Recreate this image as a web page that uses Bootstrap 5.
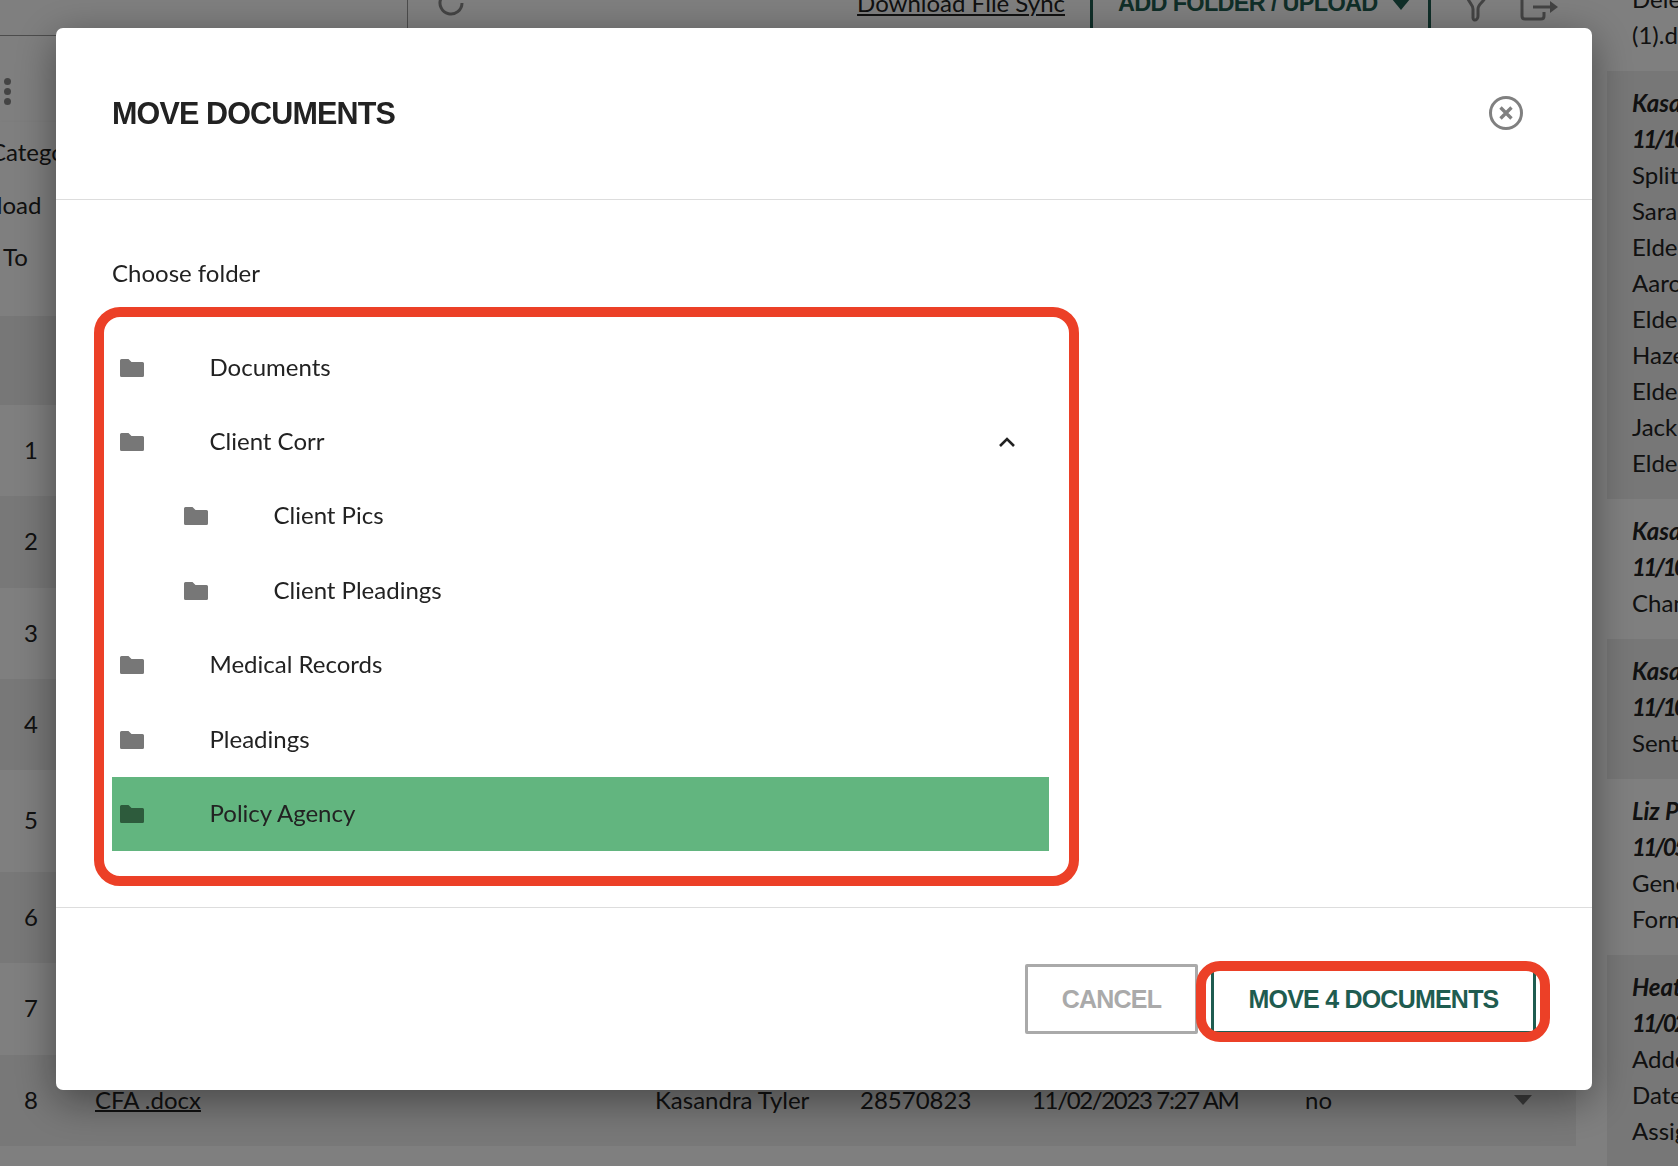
<!doctype html>
<html lang="en">
<head>
<meta charset="utf-8">
<title>Move documents</title>
<link rel="stylesheet" href="https://cdn.jsdelivr.net/npm/bootstrap@5.3.0/dist/css/bootstrap.min.css">
<style>
html,body{height:100%;overflow:hidden}
body{font-family:"Lato","Liberation Sans",sans-serif;font-size:24px;color:#222;background:#fff}
.pg-wrap{width:1678px;height:1166px;overflow:hidden}
.main-col{width:1576px;flex:none}
.side-col{width:102px;flex:none;padding-left:31px;margin-top:-33px;line-height:36px;white-space:nowrap;overflow:hidden}
.side-block{padding:14px 0 18px 25px;width:200px;overflow:hidden}
.side-block.shaded{background:#eee}
.side-head{font-weight:700;font-style:italic}
.side-date{letter-spacing:-2.500px}
.top-bar{height:56px;margin-top:-20px}
.top-left{width:408px;border-right:1px solid #999;border-bottom:1px solid #999}
.top-mid{width:682px;padding:0 25px 10px 29px}
.top-mid a{color:#222}
.add-btn{width:341px;height:56px;border-left:3px solid #1f5c50;border-right:3px solid #1f5c50;padding:0 0 10px 25px;font:700 23.500px "Liberation Sans",sans-serif;letter-spacing:-.7px;color:#1f5c50;gap:14px}
.caret-down{width:0;height:0;border-left:9.500px solid transparent;border-right:9.500px solid transparent;border-top:11px solid #1f5c50;margin-top:2px}
.top-icons{gap:30px;padding:0 0 0 34px;margin-top:16px}
.dots-zone{height:86px;padding:42px 0 0 4px}
.dots-zone i{display:block;width:7px;height:7px;border-radius:50%;background:#888;margin-bottom:3px}
.side-menu{height:168px;box-shadow:0 4px 6px rgba(0,0,0,.3);background:#fff;line-height:52.500px;padding-top:4px;overflow:hidden;white-space:nowrap}
.mi-a{margin-left:-10px}.mi-b{margin-left:-34px}.mi-c{margin-left:3px}
.band-a{height:26px;background:#fff}
.band-b{height:89px;background:#eee}
.doc-row{padding-bottom:2px}
.doc-row.even{background:#f0f0f0}
.h91{height:91px}.h92{height:92px}.h102{height:102px}
.num-cell{width:62px;text-align:center}
.c-name{width:33px}
.c-file{width:560px}.c-file a{color:#222;text-decoration-thickness:2px}
.c-user{width:205px}.c-id{width:172px}.c-date{width:273px;letter-spacing:-1.350px}.c-flag{width:209px}
.caret-mini{width:0;height:0;border-left:9.500px solid transparent;border-right:9.500px solid transparent;border-top:10px solid #777}
.foot-band{height:20px;background:#fff}
.dim-layer{position:fixed;inset:0;background:rgba(0,0,0,.5);z-index:1040}
.move-modal{z-index:1050;overflow:hidden}
.move-dialog{max-width:none;width:1536px;height:1062px;margin:28px 0 0 56px}
.move-content{height:1062px;border:0;border-radius:7px;box-shadow:0 10px 42px rgba(0,0,0,.42)}
.move-head{height:172px;padding:0 56px;border-bottom:1px solid #ddd;border-radius:0}
.move-title{font:700 30.500px/1 "Liberation Sans",sans-serif;letter-spacing:-.85px;color:#222;margin:0}
.close-x{background:none;border:0;padding:0;width:36px;height:36px;margin:-2px 12px 0 auto;line-height:0}
.move-body{padding:56px 56px 0;flex:1 1 auto}
.choose-label{line-height:34px;height:51px}
.tree-ring{width:985px;height:579px;margin-left:-18px;border:10px solid #ec4027;border-radius:26px;padding:13.500px 20px 0 8px}
.tree-item{height:74.400px;padding-left:8px;color:#222}
.tree-item span{margin-top:-2px}
.tree-item.nested{padding-left:72px}
.tree-item.picked{background:#62b57f}
.tree-item.picked .ficon{fill:#2d5b3c}
.ficon{fill:#777;width:24px;height:18px;flex:none;margin-right:65.500px}
.chev{margin-left:auto;margin-right:33px}
.move-foot{height:183px;padding:56px;border-top:1px solid #ddd;border-radius:0;align-items:flex-start;flex-wrap:nowrap;gap:13px}
.act-btn{height:70px;border-radius:2px;font:700 25px/1 "Liberation Sans",sans-serif;letter-spacing:-.78px;margin:0;background:#fff;--bs-btn-active-bg:#fff}
.cancel-act{width:173px;border:3px solid #aaa;color:#aaa}
.move-act{width:325px;border:3px solid #1f5c50;color:#1f5c50}
.act-wrap{margin:0}
.act-ring{position:absolute;left:-15px;right:-14px;top:-3px;bottom:-8px;border:10px solid #ec4027;border-radius:24px;pointer-events:none}
</style>
</head>
<body>
<div class="pg-wrap d-flex">
  <div class="main-col">
    <div class="top-bar d-flex">
      <div class="top-left"></div>
      <div class="top-mid d-flex align-items-center justify-content-between flex-grow-0">
        <svg width="28" height="28" viewBox="0 0 28 28" fill="none" stroke="#888" stroke-width="3"><path d="M25 14a11 11 0 1 1-4-8.500"/><path d="M22 0v7h-7"/></svg>
        <a href="#">Download File Sync</a>
      </div>
      <div class="add-btn d-flex align-items-center"><span>ADD FOLDER / UPLOAD</span><span class="caret-down"></span></div>
      <div class="top-icons d-flex align-items-start">
        <svg width="24" height="26" viewBox="0 0 24 26" fill="none" stroke="#888" stroke-width="3"><path d="M2 0c1 6 6 8 6 13v9c0 2 2 3 4 1 1-1 1-2 1-3v-7c0-5 6-7 8-13"/></svg>
        <svg width="42" height="26" viewBox="0 0 42 26" fill="none" stroke="#888" stroke-width="3"><path d="M26 1H6Q3 1 3 4v16q0 3 3 3h16q3 0 3-3v-4"/><path d="M14 11h22"/><path d="M31 5l8 6-8 6z" stroke-width="0" fill="#888"/></svg>
      </div>
    </div>
    <div class="dots-zone"><i></i><i></i><i></i></div>
    <div class="side-menu">
      <div class="mi-a">Category</div>
      <div class="mi-b">Upload</div>
      <div class="mi-c">To</div>
    </div>
    <div class="band-a"></div>
    <div class="band-b"></div>
    <div class="doc-row h91 d-flex align-items-center"><div class="num-cell">1</div></div>
    <div class="doc-row even h92 d-flex align-items-center"><div class="num-cell">2</div></div>
    <div class="doc-row h91 d-flex align-items-center"><div class="num-cell">3</div></div>
    <div class="doc-row even h91 d-flex align-items-center"><div class="num-cell">4</div></div>
    <div class="doc-row h102 d-flex align-items-center"><div class="num-cell">5</div></div>
    <div class="doc-row even h91 d-flex align-items-center"><div class="num-cell">6</div></div>
    <div class="doc-row h92 d-flex align-items-center"><div class="num-cell">7</div></div>
    <div class="doc-row even h91 d-flex align-items-center">
      <div class="num-cell">8</div><div class="c-name"></div>
      <div class="c-file"><a href="#">CFA .docx</a></div>
      <div class="c-user">Kasandra Tyler</div>
      <div class="c-id">28570823</div>
      <div class="c-date">11/02/2023 7:27 AM</div>
      <div class="c-flag">no</div>
      <div class="caret-mini"></div>
    </div>
    <div class="foot-band"></div>
  </div>
  <div class="side-col">
    <div class="side-block">Deleted<br>(1).docx</div>
    <div class="side-block shaded"><div class="side-head">Kasandra Tyler</div><div class="side-head side-date">11/10/2023</div>Split<br>Sarah<br>Elder<br>Aaron<br>Elder<br>Hazel<br>Elder<br>Jack<br>Elder</div>
    <div class="side-block"><div class="side-head">Kasandra Tyler</div><div class="side-head side-date">11/10/2023</div>Changed</div>
    <div class="side-block shaded"><div class="side-head">Kasandra Tyler</div><div class="side-head side-date">11/10/2023</div>Sent</div>
    <div class="side-block"><div class="side-head">Liz Parker</div><div class="side-head side-date">11/05/2023</div>Generated<br>Form</div>
    <div class="side-block shaded"><div class="side-head">Heather</div><div class="side-head side-date">11/02/2023</div>Added<br>Date<br>Assigned</div>
  </div>
</div>

<div class="dim-layer"></div>

<div class="modal d-block move-modal" tabindex="-1">
  <div class="modal-dialog move-dialog">
    <div class="modal-content move-content">
      <div class="modal-header move-head">
        <h5 class="modal-title move-title">MOVE DOCUMENTS</h5>
        <button type="button" class="close-x" aria-label="Close">
          <svg width="36" height="36" viewBox="0 0 36 36" fill="none" stroke="#808080"><circle cx="18" cy="18" r="15.500" stroke-width="3"/><path d="M12.500 12.500l11 11M23.500 12.500l-11 11" stroke-width="3.400"/></svg>
        </button>
      </div>
      <div class="modal-body move-body">
        <div class="choose-label">Choose folder</div>
        <div class="tree-ring">
          <div class="tree-item d-flex align-items-center"><svg class="ficon" viewBox="0 0 24 18"><path d="M1.500 0h7l3 3h11q1.500 0 1.500 1.500v12q0 1.500-1.500 1.500h-21q-1.500 0-1.500-1.500v-15q0-1.500 1.500-1.500z"/></svg><span>Documents</span></div>
          <div class="tree-item d-flex align-items-center"><svg class="ficon" viewBox="0 0 24 18"><path d="M1.500 0h7l3 3h11q1.500 0 1.500 1.500v12q0 1.500-1.500 1.500h-21q-1.500 0-1.500-1.500v-15q0-1.500 1.500-1.500z"/></svg><span>Client Corr</span>
            <svg class="chev" width="18" height="12" viewBox="0 0 18 12" fill="none" stroke="#222" stroke-width="2.600"><path d="M2 10l7-7 7 7"/></svg></div>
          <div class="tree-item nested d-flex align-items-center"><svg class="ficon" viewBox="0 0 24 18"><path d="M1.500 0h7l3 3h11q1.500 0 1.500 1.500v12q0 1.500-1.500 1.500h-21q-1.500 0-1.500-1.500v-15q0-1.500 1.500-1.500z"/></svg><span>Client Pics</span></div>
          <div class="tree-item nested d-flex align-items-center"><svg class="ficon" viewBox="0 0 24 18"><path d="M1.500 0h7l3 3h11q1.500 0 1.500 1.500v12q0 1.500-1.500 1.500h-21q-1.500 0-1.500-1.500v-15q0-1.500 1.500-1.500z"/></svg><span>Client Pleadings</span></div>
          <div class="tree-item d-flex align-items-center"><svg class="ficon" viewBox="0 0 24 18"><path d="M1.500 0h7l3 3h11q1.500 0 1.500 1.500v12q0 1.500-1.500 1.500h-21q-1.500 0-1.500-1.500v-15q0-1.500 1.500-1.500z"/></svg><span>Medical Records</span></div>
          <div class="tree-item d-flex align-items-center"><svg class="ficon" viewBox="0 0 24 18"><path d="M1.500 0h7l3 3h11q1.500 0 1.500 1.500v12q0 1.500-1.500 1.500h-21q-1.500 0-1.500-1.500v-15q0-1.500 1.500-1.500z"/></svg><span>Pleadings</span></div>
          <div class="tree-item picked d-flex align-items-center"><svg class="ficon" viewBox="0 0 24 18"><path d="M1.500 0h7l3 3h11q1.500 0 1.500 1.500v12q0 1.500-1.500 1.500h-21q-1.500 0-1.500-1.500v-15q0-1.500 1.500-1.500z"/></svg><span>Policy Agency</span></div>
        </div>
      </div>
      <div class="modal-footer move-foot">
        <button type="button" class="btn act-btn cancel-act">CANCEL</button>
        <div class="act-wrap position-relative">
          <button type="button" class="btn act-btn move-act">MOVE 4 DOCUMENTS</button>
          <div class="act-ring"></div>
        </div>
      </div>
    </div>
  </div>
</div>
<script src="https://cdn.jsdelivr.net/npm/bootstrap@5.3.0/dist/js/bootstrap.bundle.min.js"></script>
</body>
</html>
